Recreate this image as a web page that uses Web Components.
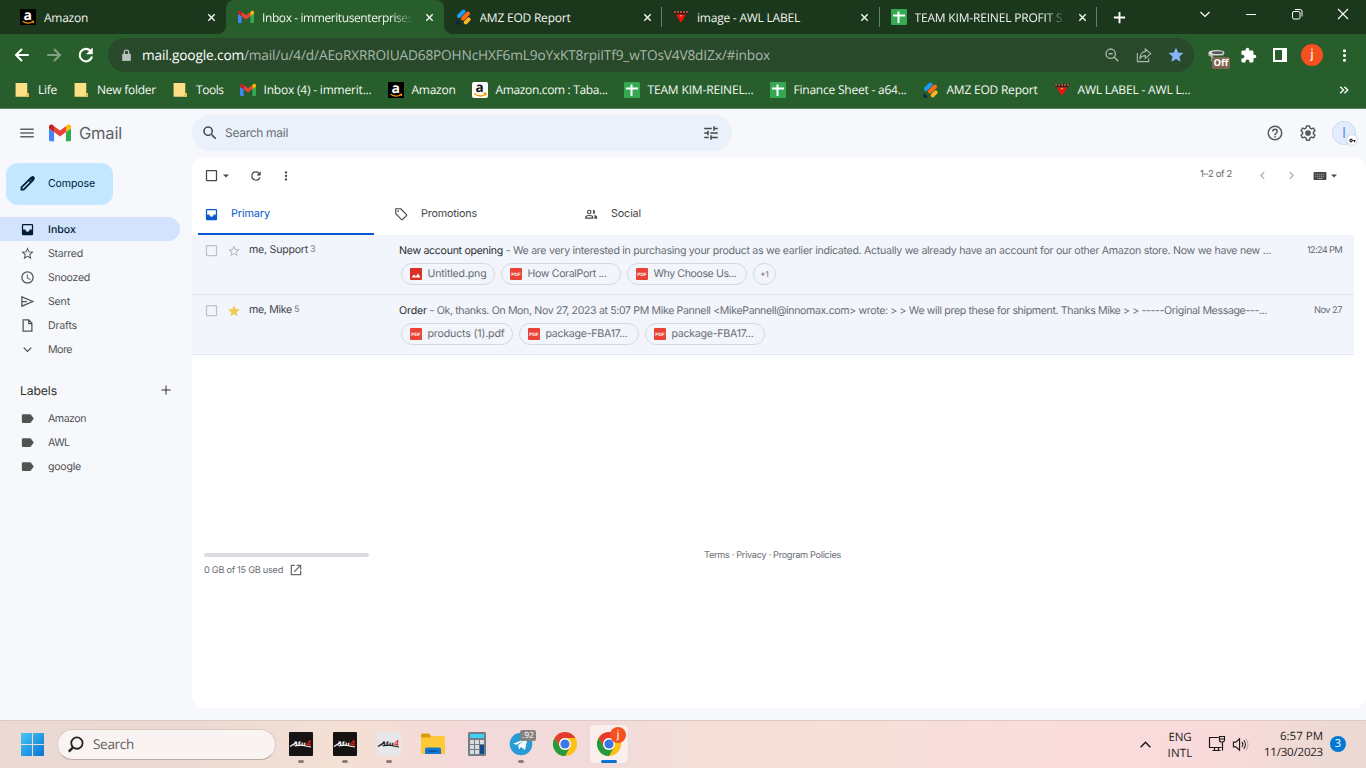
<!DOCTYPE html>
<html lang="en">
<head>
<meta charset="utf-8">
<title>Inbox</title>
<style>
	body {
		margin: 0;
		width: 1366px;
		height: 768px;
		overflow: hidden;
		display: flex;
		flex-direction: column;
		font-family: "Open Sans", "Noto Sans", sans-serif;
		text-rendering: geometricPrecision;
	}
</style>
</head>
<body>
	<browser-tabs></browser-tabs>
	<browser-toolbar></browser-toolbar>
	<bookmarks-bar>
		<book-mark icon="folder" w="19">Life</book-mark>
		<book-mark icon="folder" w="59">New folder</book-mark>
		<book-mark icon="folder" w="27.500">Tools</book-mark>
		<book-mark icon="gmail" w="108">Inbox (4) - immerit...</book-mark>
		<book-mark icon="amazon" w="44">Amazon</book-mark>
		<book-mark icon="amazonLight" w="112">Amazon.com : Taba...</book-mark>
		<book-mark icon="sheet" w="106">TEAM KIM-REINEL...</book-mark>
		<book-mark icon="sheet" w="113">Finance Sheet - a64...</book-mark>
		<book-mark icon="stripes" w="91">AMZ EOD Report</book-mark>
		<book-mark icon="awl" w="113">AWL LABEL - AWL L...</book-mark>
	</bookmarks-bar>
	<mail-app></mail-app>
	<task-bar></task-bar>

<script>
function html(strings, ...values) {
	return String.raw({ raw: strings }, ...values)
}

const mu = (bg, fg) => `<rect width="24" height="24" rx="1" fill="${bg}"/>
	<text x="4.500" y="14.300" font-size="7" font-weight="700" font-style="italic" font-family="Liberation Serif" textLength="12" lengthAdjust="spacingAndGlyphs" fill="${fg}">Mu</text>
	<path d="M1 14.500l7-4.500M6 14l6-1 7 1.500 3 .5" stroke="${fg}" stroke-width="1.200" fill="none"/>
	<text x="17" y="14" font-size="8.500" font-weight="700" font-style="italic" font-family="Liberation Sans" fill="#e6201c">4</text>`

const chrome = `<circle cx="12" cy="12" r="12" fill="#fbc116"/>
	<path d="M1.6 6A12 12 0 0 1 22.4 6H12a6 6 0 0 0-5.2 9z" fill="#e33b2e"/>
	<path d="M1.6 6a12 12 0 0 0 10.4 18l5.2-9a6 6 0 0 1-10.4 0z" fill="#249a41"/>
	<circle cx="12" cy="12" r="5.9" fill="#fff"/><circle cx="12" cy="12" r="4.6" fill="#3b78e7"/>`

const sheet = `<rect width="16" height="16" rx="1" fill="#34a853"/><path d="M2 6.5h12M7.5 2.5V14" stroke="#fff" stroke-width="2"/>`

// name: [viewBox size, markup]
const icons = {
	amazon: [16, `<rect width="16" height="16" fill="#000"/><text x="3.400" y="10.500" font-size="14" font-weight="700" font-family="Open Sans" fill="#fff">a</text><path d="M2.500 12.200q5.500 3.500 10.500.6M11.500 12.300h2v1.600" stroke="#f90" stroke-width="1.100" fill="none"/>`],
	amazonLight: [16, `<rect width="16" height="16" rx="2" fill="#fff"/><text x="3.400" y="10" font-size="13.500" font-weight="700" font-family="Open Sans" fill="#111">a</text><path d="M2 11.500q6 4.500 11.500.8M11.500 11.300h2.500v2" stroke="#f90" stroke-width="1.400" fill="none"/>`],
	gmail: [24, `<path d="M1.500 21H5.500V11L0 7v12.500A1.500 1.500 0 0 0 1.500 21z" fill="#4285f4"/><path d="M18.500 21h4a1.500 1.500 0 0 0 1.500-1.500V7l-5.500 4z" fill="#34a853"/><path d="M18.500 4.500V11L24 7V5.200c0-2.200-2.500-3.200-4.100-2z" fill="#fbbc04"/><path d="M5.500 11V4.500l6.500 4.900 6.500-4.900V11L12 15.900z" fill="#ea4335"/><path d="M0 5.200V7l5.500 4V4.500L4.100 3.200C2.500 2 0 3 0 5.200z" fill="#c5221f"/>`],
	stripes: [16, `<g stroke-width="4" stroke-linecap="round"><path d="M3 7l4.500-4.500" stroke="#1a9bf5"/><path d="M7 9.500l5-5" stroke="#ff6a13"/><path d="M9.700 13.300l3-3" stroke="#fbb829"/></g><path d="M.5 11v4.500H5z" fill="#0b1a5c"/>`],
	awl: [16, `<path d="M0 2h16l-1.500 3h-13z" fill="#45131a"/><path d="M1 3h14" stroke="#e3a05f" stroke-dasharray="2 1"/><path d="M3 5.500h10L8 14z" fill="#f5100c"/><path d="M6.500 6.500h3l-1.500 1z" fill="#fff"/>`],
	sheet: [16, sheet],
	folder: [12, `<path d="M.5 0h10v9.500l1.300 1V13H.5z" transform="scale(1 .9)" fill="#fddf86"/><path d="M10.700 8.500h1.300V12H9.500v-1.500z" fill="#eac04b"/>`],
	close: [24, `<path d="M5 5l14 14M19 5L5 19" stroke="currentColor" stroke-width="3.200"/>`],
	plus: [24, `<path d="M12 3v18M3 12h18" stroke="currentColor" stroke-width="3"/>`],
	thinPlus: [24, `<path d="M12 3v18M3 12h18" stroke="currentColor" stroke-width="2"/>`],
	chevron: [24, `<path d="M3 8l9 9 9-9" stroke="currentColor" stroke-width="2.300" fill="none"/>`],
	up: [24, `<path d="M3 17l9-9 9 9" stroke="currentColor" stroke-width="2.800" fill="none"/>`],
	minimize: [10, `<path d="M0 5.500h10" stroke="currentColor"/>`],
	restore: [12, `<rect x="1.500" y="3.500" width="7.500" height="7.500" rx="1.500" fill="none" stroke="currentColor"/><path d="M4 1.500H9.200a1.800 1.800 0 0 1 1.800 1.800V8.500" fill="none" stroke="currentColor"/>`],
	shut: [12, `<path d="M1 1l10 10M11 1L1 11" stroke="currentColor" stroke-width="1.100"/>`],
	back: [24, `<path d="M21 12H5M12 4l-8 8 8 8" stroke="currentColor" stroke-width="2.700" fill="none"/>`],
	forward: [24, `<path d="M3 12h16M12 4l8 8-8 8" stroke="currentColor" stroke-width="2.700" fill="none"/>`],
	reload: [24, `<path d="M18.500 7A8.300 8.300 0 1 0 20 14" stroke="currentColor" stroke-width="2.900" fill="none"/><path d="M21 2v9h-9z" fill="currentColor"/>`],
	refresh: [24, `<path d="M17.650 6.350A7.960 7.960 0 0 0 12 4a8 8 0 1 0 7.730 10h-2.080A6 6 0 1 1 12 6c1.660 0 3.140.69 4.220 1.780L13 11h7V4z" fill="currentColor"/>`],
	lock: [24, `<path d="M4 9h16v13H4z" fill="currentColor"/><path d="M8 10V6a4 4 0 0 1 8 0v4" stroke="currentColor" stroke-width="2.500" fill="none"/>`],
	zoomOut: [24, `<circle cx="10" cy="10" r="7" fill="none" stroke="currentColor" stroke-width="2"/><path d="M15 15l6.500 6.500M7 10h6" stroke="currentColor" stroke-width="2.200"/>`],
	share: [24, `<path d="M2 9v13h17v-5" fill="none" stroke="currentColor" stroke-width="1.700"/><path d="M14 3l8 7-8 7v-4c-4 0-6 1-8 4 0-6 3-10 8-10z" fill="none" stroke="currentColor" stroke-width="1.700"/>`],
	star: [24, `<path d="M12 17.270L18.180 21l-1.640-7.030L22 9.240l-7.190-.61L12 2 9.190 8.630 2 9.240l5.460 4.730L5.820 21z" fill="currentColor"/>`],
	starOutline: [24, `<path d="M22 9.240l-7.190-.62L12 2 9.190 8.630 2 9.240l5.460 4.730L5.820 21 12 17.270 18.180 21l-1.630-7.030zM12 15.400l-3.760 2.270 1-4.280-3.320-2.880 4.380-.38L12 6.100l1.710 4.040 4.380.38-3.320 2.880 1 4.280z" fill="currentColor"/>`],
	puzzle: [24, `<path d="M20.500 11H19V7a2 2 0 0 0-2-2h-4V3.500a2.500 2.500 0 0 0-5 0V5H4a2 2 0 0 0-2 2v3.800h1.500a2.700 2.700 0 0 1 0 5.400H2V20a2 2 0 0 0 2 2h3.800v-1.500a2.700 2.700 0 0 1 5.400 0V22H17a2 2 0 0 0 2-2v-4h1.500a2.500 2.500 0 0 0 0-5z" fill="currentColor"/>`],
	panel: [14, `<path d="M0 0h14v14H0zM2 2v10h7V2z" fill-rule="evenodd" fill="currentColor"/>`],
	dots: [24, `<path d="M12 8a2 2 0 1 0 0-4 2 2 0 0 0 0 4zm0 2a2 2 0 1 0 0 4 2 2 0 0 0 0-4zm0 6a2 2 0 1 0 0 4 2 2 0 0 0 0-4z" fill="currentColor"/>`],
	visor: [18, `<path d="M.5 6v3l3 1.500V15l2 1V9h11V6z" fill="#b5b5b5"/><ellipse cx="9" cy="6" rx="8.500" ry="2.800" fill="#dcdcdc"/><ellipse cx="10" cy="6" rx="6" ry="1.400" fill="#555"/>`],
	more: [12, `<path d="M1.500 2l4 4-4 4M6.500 2l4 4-4 4" stroke="currentColor" stroke-width="1.700" fill="none"/>`],
	menu: [24, `<path d="M3 18h18v-2H3zm0-5h18v-2H3zm0-7v2h18V6z" fill="currentColor"/>`],
	search: [24, `<path d="M15.500 14h-.79l-.28-.27a6.500 6.500 0 1 0-.7.700l.27.280v.79l5 4.990L20.490 19zm-6 0a4.500 4.500 0 1 1 0-9 4.500 4.500 0 0 1 0 9z" fill="currentColor"/>`],
	tune: [24, `<path d="M3 17v2h6v-2zM3 5v2h10V5zm10 16v-2h8v-2h-8v-2h-2v6zM7 9v2H3v2h4v2h2V9zm14 4v-2H11v2zm-6-4h2V7h4V5h-4V3h-2z" fill="currentColor"/>`],
	help: [24, `<path d="M11 18h2v-2h-2zm1-16a10 10 0 1 0 0 20 10 10 0 0 0 0-20zm0 18a8 8 0 1 1 0-16 8 8 0 0 1 0 16zm0-14a4 4 0 0 0-4 4h2a2 2 0 1 1 4 0c0 2-3 1.750-3 5h2c0-2.250 3-2.500 3-5a4 4 0 0 0-4-4z" fill="currentColor"/>`],
	gear: [24, `<path d="M10 2.500h4l.6 2.800 2 1.200 2.700-1 2 3.500L19.200 11v2l2.100 2-2 3.500-2.700-1-2 1.200-.6 2.800h-4l-.6-2.800-2-1.200-2.700 1L2.700 15l2.100-2v-2L2.700 9l2-3.500 2.700 1 2-1.200z" fill="none" stroke="currentColor" stroke-width="2" stroke-linejoin="round"/><circle cx="12" cy="12" r="3.800" fill="currentColor"/>`],
	key: [24, `<path d="M12.700 10a6 6 0 1 0 0 4H17v4h4v-4h2v-4zM7 14a2 2 0 1 1 0-4 2 2 0 0 1 0 4z" fill="currentColor"/>`],
	pencil: [24, `<path d="M3.500 17.500l13-13a2.100 2.100 0 0 1 3 3l-13 13H3.500zM14 7l3 3" fill="none" stroke="currentColor" stroke-width="2.500"/><path d="M15 5l2.500-2.500a2.300 2.300 0 0 1 4 4L19 9z" fill="currentColor"/>`],
	inbox: [24, `<path d="M19 3H5a2 2 0 0 0-2 2v14a2 2 0 0 0 2 2h14a2 2 0 0 0 2-2V5a2 2 0 0 0-2-2zm0 11h-4a3 3 0 0 1-6 0H5V5h14z" fill="currentColor"/><path d="M5 12h14v7H5zM8.500 12a3.500 3.500 0 0 0 7 0z" fill-rule="evenodd" fill="currentColor"/>`],
	clock: [24, `<path d="M12 2a10 10 0 1 0 0 20 10 10 0 0 0 0-20zm0 18a8 8 0 1 1 0-16 8 8 0 0 1 0 16zm.5-13H11v6l5.250 3.150.75-1.230-4.500-2.670z" fill="currentColor"/>`],
	send: [24, `<path d="M3 4.500l17.500 7.500L3 19.500zM3 12h8" fill="none" stroke="currentColor" stroke-width="2"/>`],
	draft: [24, `<path d="M5 3h9l5 5v13H5zM14 3v6h5" fill="none" stroke="currentColor" stroke-width="2"/>`],
	expand: [24, `<path d="M6 9l6 6 6-6" fill="none" stroke="currentColor" stroke-width="2.200"/>`],
	label: [24, `<path d="M17.630 5.840A2 2 0 0 0 16 5H5a2 2 0 0 0-2 2v10a2 2 0 0 0 2 2h11a2 2 0 0 0 1.630-.84L22 12z" fill="currentColor"/>`],
	box: [24, `<path d="M19 5v14H5V5zm0-2H5a2 2 0 0 0-2 2v14a2 2 0 0 0 2 2h14a2 2 0 0 0 2-2V5a2 2 0 0 0-2-2z" fill="currentColor"/>`],
	caret: [8, `<path d="M0 2h8L4 6z" fill="currentColor"/>`],
	left: [24, `<path d="M15.400 7.400L14 6l-6 6 6 6 1.400-1.400L10.800 12z" fill="currentColor"/>`],
	right: [24, `<path d="M10 6L8.600 7.400l4.600 4.600-4.600 4.600L10 18l6-6z" fill="currentColor"/>`],
	keyboard: [24, `<rect x="1" y="5" width="22" height="14" rx="1.500" fill="currentColor"/><path d="M4 9h16M4 12.500h16" stroke="#aaa" stroke-width="1.500" stroke-dasharray="2 1.200"/><path d="M7 16h10" stroke="#aaa" stroke-width="1.500"/>`],
	tag: [24, `<path d="M3 3h8.500l10 10a1 1 0 0 1 0 1.500l-7 7a1 1 0 0 1-1.500 0L3 11.500z" fill="none" stroke="currentColor" stroke-width="2" stroke-linejoin="round"/><circle cx="7" cy="7" r="1.500" fill="currentColor"/>`],
	people: [24, `<circle cx="9" cy="8.500" r="3" fill="none" stroke="currentColor" stroke-width="2"/><path d="M3 19v-1.500c0-2 3.500-3 6-3s6 1 6 3V19z" stroke="currentColor" stroke-width="2" fill="none"/><path d="M15 4.500a4 4 0 0 1 0 8q2-4 0-8zM17.500 13.700c3 .5 5 1.500 5 3.300v3H18v-3c0-1.500 0-2.300-.5-3.300z" fill="currentColor"/>`],
	image: [12, `<rect width="12" height="12" rx="1" fill="#d93025"/><path d="M1.500 9.500L4 6.500 6 8.500l2-3 2.500 4z" fill="#fff"/>`],
	pdf: [12, `<rect width="12" height="12" rx="1" fill="#ea4335"/><text x="1.200" y="7.800" textLength="9.600" font-size="4.800" font-weight="800" font-family="Liberation Sans" fill="#fff">PDF</text>`],
	open: [24, `<path d="M10 4H4v16h16v-7M13 4h7v7M19 5L9 15" fill="none" stroke="currentColor" stroke-width="2.200"/>`],
	windows: [24, `<defs><linearGradient id="w" x1="0" y1="0" x2="1" y2="1"><stop stop-color="#46c8f7"/><stop offset="1" stop-color="#0673d2"/></linearGradient></defs><path d="M0 0h11.400v11.400H0zM12.600 0H24v11.400H12.600zM0 12.600h11.400V24H0zM12.600 12.600H24V24H12.600z" fill="url(#w)"/>`],
	find: [24, `<circle cx="14" cy="10" r="8" fill="none" stroke="currentColor" stroke-width="2.500"/><path d="M8.500 16l-6 6" stroke="currentColor" stroke-width="3.200"/>`],
	muDark: [24, mu('#171313', '#fff')],
	muLight: [24, mu('#e6e7e8', '#111')],
	explorer: [24, `<path d="M0 3a1.500 1.500 0 0 1 1.500-1.500H8L10 4v4H0z" fill="#dc9b05"/><path d="M0 5.500h9l1.500-1.500H22.500A1.500 1.500 0 0 1 24 5.500V22H0z" fill="#fdc938"/><path d="M4 22v-4.500A2 2 0 0 1 6 15.500h12a2 2 0 0 1 2 2V22z" fill="#1278cf"/><path d="M7.500 19h9" stroke="#0a4e9b" stroke-width="1.500"/>`],
	calculator: [24, `<rect x="3" width="18" height="24" rx="1.500" fill="#747b83"/><path d="M5 2h14v4H5z" fill="#3cd1f5"/><path d="M5 8h4v4H5zm5 0h4v4h-4zm5 0h4v4h-4zM5 13h4v4H5zm5 0h4v4h-4zM5 18h4v4H5zm5 0h4v4h-4z" fill="#d7dde2"/><path d="M15 13h4v9h-4z" fill="#114c8b"/>`],
	telegram: [24, `<circle cx="12" cy="12" r="11.300" fill="#269bd5"/><path d="M4 11.800L18.500 6 16 18l-4-3-2 2.500-.8-4.300 6-5-7.400 4.600z" fill="#fff"/>`],
	chrome: [24, chrome],
	network: [18, `<path d="M10.500 2.500H1.500v10h12M4.500 15.500h8M6.500 13v2.500M10.500 13v2.500M14.500 7v8.500M11.500 1.500h5v3.500a2 2 0 0 1-2 2h-1a2 2 0 0 1-2-2zM11.500 4h5" fill="none" stroke="currentColor" stroke-width="1.200"/>`],
	speaker: [18, `<path d="M1.500 6.500v5H4L8 15V3L4 6.500z" fill="none" stroke="currentColor" stroke-width="1.200"/><path d="M10.500 6.500a4 4 0 0 1 0 5M12.500 4.500a7 7 0 0 1 0 9" fill="none" stroke="currentColor" stroke-width="1.200"/><path d="M14.500 2.500a10 10 0 0 1 0 13" fill="none" stroke="currentColor" opacity=".3"/>`],
}


/**
 * Square tab with favicon, title and close button
 */
class BrowserTab extends HTMLElement {
	connectedCallback() {
		this.attachShadow({ mode: 'open' }).innerHTML = html`
			<ui-icon name="${this.getAttribute('icon')}" size="16"></ui-icon>
			<div class="title"><fit-text w="${this.getAttribute('w')}"><slot></slot></fit-text></div>
			<ui-icon class="close" name="close" size="11"></ui-icon>
			<style>
			:host {
				box-sizing: border-box;
				width: 217.5px;
				height: 34px;
				padding: 0 8.500px 0 12px;
				display: flex;
				align-items: center;
				color: #f1f4f1;
				position: relative;
			}
			:host([first]) {
				width: 218px;
				padding-right: 9.500px;
			}
			.title {
				margin-left: 8px;
				width: 151px;
				overflow: hidden;
				white-space: nowrap;
			}
			:host([long]) .title {
				-webkit-mask-image: linear-gradient(to right, #000 130px, transparent 151px);
			}
			.close {
				margin-left: auto;
			}
			:host([line])::after {
				content: "";
				position: absolute;
				right: -1px;
				top: 7px;
				width: 1px;
				height: 20px;
				background: #64806a;
			}
			:host([active]) {
				background: #285e2b;
				border-radius: 8px 8px 0 0;
			}
			:host([active])::before, :host([active])::after {
				content: "";
				position: absolute;
				bottom: 0;
				width: 8px;
				height: 8px;
			}
			:host([active])::before {
				left: -8px;
				background: radial-gradient(circle at 0 0, transparent 7.500px, #285e2b 8px);
			}
			:host([active])::after {
				right: -8px;
				background: radial-gradient(circle at 100% 0, transparent 7.500px, #285e2b 8px);
			}
			</style>
		`
	}
}


/**
 *
 */
class BrowserTabs extends HTMLElement {
	connectedCallback() {
		this.attachShadow({ mode: 'open' }).innerHTML = html`
			<browser-tab icon="amazon" w="44" first>Amazon</browser-tab>
			<browser-tab icon="gmail" w="151" active long>Inbox - immeritusenterprises</browser-tab>
			<browser-tab icon="stripes" w="91" line>AMZ EOD Report</browser-tab>
			<browser-tab icon="awl" w="103" line>image - AWL LABEL</browser-tab>
			<browser-tab icon="sheet" w="148" line long>TEAM KIM-REINEL PROFIT S</browser-tab>
			<span class="new"><ui-icon name="plus" size="15"></ui-icon></span>
			<div class="window">
				<span><ui-icon name="chevron" size="12"></ui-icon></span>
				<span><ui-icon name="minimize" size="10"></ui-icon></span>
				<span><ui-icon name="restore" size="12"></ui-icon></span>
				<span><ui-icon name="shut" size="12"></ui-icon></span>
			</div>
			<style>
			:host {
				display: flex;
				height: 34px;
				padding-left: 8px;
				background: #1b371c;
				color: #fff;
				font-size: 12px;
			}
			span {
				display: flex;
				align-items: center;
				justify-content: center;
			}
			.new {
				width: 46px;
			}
			.window {
				margin-left: auto;
				display: flex;
				height: 28px;
			}
			.window span {
				width: 46px;
			}
			</style>
		`
	}
}


/**
 * Navigation buttons, address field and extensions
 */
class BrowserToolbar extends HTMLElement {
	connectedCallback() {
		this.attachShadow({ mode: 'open' }).innerHTML = html`
			<span><ui-icon name="back" size="18"></ui-icon></span>
			<span class="off"><ui-icon name="forward" size="18"></ui-icon></span>
			<span><ui-icon name="reload" size="18"></ui-icon></span>
			<div class="address">
				<ui-icon class="lock" name="lock" size="13"></ui-icon>
				<fit-text class="host" w="102">mail.google.com</fit-text><fit-text w="526">/mail/u/4/d/AEoRXRROIUAD68POHNcHXF6mL9oYxKT8rpiITf9_wTOsV4V8dIZx/#inbox</fit-text>
				<div class="actions">
					<span><ui-icon name="zoomOut" size="16"></ui-icon></span>
					<span><ui-icon name="share" size="16"></ui-icon></span>
					<span class="saved"><ui-icon name="star" size="18"></ui-icon></span>
				</div>
			</div>
			<span class="ext"><ui-icon name="visor" size="17"></ui-icon><b>Off</b></span>
			<span><ui-icon name="puzzle" size="17"></ui-icon></span>
			<span><ui-icon name="panel" size="14"></ui-icon></span>
			<span><i>j</i></span>
			<span><ui-icon name="dots" size="19"></ui-icon></span>
			<style>
			:host {
				display: flex;
				align-items: center;
				height: 42px;
				padding: 0 6px;
				background: #285e2b;
				color: #fff;
				font-size: 13.700px;
			}
			span {
				width: 32px;
				height: 32px;
				display: flex;
				align-items: center;
				justify-content: center;
				position: relative;
			}
			.off {
				color: #83a084;
			}
			.address {
				box-sizing: border-box;
				width: 1086px;
				height: 34px;
				margin: 0 6px;
				padding: 0 2px 0 12px;
				border-radius: 17px;
				background: #28492a;
				display: flex;
				align-items: center;
				color: #a9b8aa;
			}
			.lock {
				margin-right: 9px;
				color: #b9c2b9;
			}
			.host {
				color: #fff;
			}
			.actions {
				margin-left: auto;
				display: flex;
			}
			.saved {
				color: #8ab4f8;
			}
			b {
				position: absolute;
				left: 12px;
				top: 18px;
				width: 18px;
				height: 12px;
				border-radius: 2px;
				background: #826551;
				font-size: 9.500px;
				line-height: 12px;
				text-align: center;
			}
			i {
				width: 22px;
				height: 22px;
				border-radius: 50%;
				background: #f4511e;
				font: 13px/21px Roboto, sans-serif;
				text-align: center;
			}
			</style>
		`
	}
}


/**
 *
 */
class BookMark extends HTMLElement {
	connectedCallback() {
		const icon = this.getAttribute('icon')
		this.attachShadow({ mode: 'open' }).innerHTML = html`
			<div><ui-icon name="${icon}" size="${icon == 'folder' ? 14 : 16}"></ui-icon></div>
			<fit-text w="${this.getAttribute('w')}"><slot></slot></fit-text>
			<style>
			:host {
				display: flex;
				align-items: center;
				gap: 8px;
			}
			div {
				width: 16px;
				display: flex;
			}
			:host([icon="folder"]) div {
				justify-content: center;
			}
			</style>
		`
	}
}

class BookmarksBar extends HTMLElement {
	connectedCallback() {
		this.attachShadow({ mode: 'open' }).innerHTML = html`
			<slot></slot>
			<ui-icon class="more" name="more" size="10"></ui-icon>
			<style>
			:host {
				box-sizing: border-box;
				display: flex;
				align-items: center;
				gap: 16px;
				height: 33px;
				padding: 0 17px 5px 14px;
				background: #285e2b;
				border-bottom: 1px solid #5d8860;
				color: #f5f8f5;
				font-size: 12px;
			}
			.more {
				margin-left: auto;
			}
			</style>
		`
	}
}


/**
 * Sidebar entry, for folders and labels
 */
class NavItem extends HTMLElement {
	connectedCallback() {
		this.attachShadow({ mode: 'open' }).innerHTML = html`
			<ui-icon name="${this.getAttribute('icon')}" size="15"></ui-icon>
			<fit-text w="${this.getAttribute('w')}"><slot></slot></fit-text>
			<style>
			:host {
				box-sizing: border-box;
				display: flex;
				align-items: center;
				gap: 13px;
				width: 180px;
				height: 24px;
				padding-left: 20px;
				color: #505352;
			}
			:host([active]) {
				background: #d3e3fd;
				border-radius: 0 12px 12px 0;
				color: #001d35;
				font-weight: 500;
			}
			</style>
		`
	}
}


/**
 *
 */
class MailSidebar extends HTMLElement {
	connectedCallback() {
		this.attachShadow({ mode: 'open' }).innerHTML = html`
			<button><ui-icon name="pencil" size="17"></ui-icon><fit-text w="47">Compose</fit-text></button>
			<nav-item icon="inbox" w="28" active>Inbox</nav-item>
			<nav-item icon="starOutline" w="35">Starred</nav-item>
			<nav-item icon="clock" w="42">Snoozed</nav-item>
			<nav-item icon="send" w="22">Sent</nav-item>
			<nav-item icon="draft" w="29">Drafts</nav-item>
			<nav-item icon="expand" w="24">More</nav-item>
			<header><fit-text w="37">Labels</fit-text><ui-icon name="thinPlus" size="12"></ui-icon></header>
			<nav-item icon="label" w="38">Amazon</nav-item>
			<nav-item icon="label" w="21.500">AWL</nav-item>
			<nav-item icon="label" w="33">google</nav-item>
			<style>
			:host {
				display: block;
				width: 192px;
				padding-top: 6px;
				box-sizing: border-box;
			}
			button {
				width: 107px;
				height: 42px;
				margin: 0 0 12px 6px;
				padding: 0 0 1px 13px;
				border: 0;
				border-radius: 12px;
				background: #c2e7ff;
				color: #001d35;
				font: inherit;
				display: flex;
				align-items: center;
				gap: 12px;
			}
			header {
				display: flex;
				justify-content: space-between;
				align-items: center;
				height: 24px;
				margin: 17px 20px 4px 20px;
				font-size: 12.200px;
				color: #303030;
			}
			</style>
		`
	}
}


/**
 *
 */
class MailHeader extends HTMLElement {
	connectedCallback() {
		this.attachShadow({ mode: 'open' }).innerHTML = html`
			<div class="brand">
				<ui-icon name="menu" size="18"></ui-icon>
				<ui-icon name="gmail" size="22"></ui-icon>
				<fit-text w="43">Gmail</fit-text>
			</div>
			<div class="search">
				<ui-icon name="search" size="18"></ui-icon>
				<fit-text w="63">Search mail</fit-text>
				<ui-icon class="tune" name="tune" size="18"></ui-icon>
			</div>
			<div class="account">
				<ui-icon name="help" size="18"></ui-icon>
				<ui-icon name="gear" size="18"></ui-icon>
				<div class="avatar">I<em><ui-icon name="key" size="7"></ui-icon></em></div>
			</div>
			<style>
			:host {
				display: flex;
				align-items: center;
				height: 48px;
				color: #56595d;
			}
			.brand {
				width: 174px;
				padding-left: 18px;
				display: flex;
				align-items: center;
				font-size: 16.500px;
				color: #5f6368;
			}
			.brand ui-icon + ui-icon {
				margin: 0 8px 0 13px;
			}
			.search {
				box-sizing: border-box;
				width: 540px;
				height: 36px;
				padding: 0 12px 0 9px;
				border-radius: 18px;
				background: #eaf1fb;
				display: flex;
				align-items: center;
				gap: 6px;
				font-size: 12px;
				color: #6b6f74;
			}
			.search fit-text {
				margin-top: -1px;
			}
			.search ui-icon {
				color: #444746;
			}
			.tune {
				margin-left: auto;
			}
			.account {
				margin-left: auto;
				padding-right: 10px;
				display: flex;
				align-items: center;
				gap: 15px;
			}
			.avatar {
				box-sizing: border-box;
				width: 24px;
				height: 24px;
				border: 1px solid #cbd9ec;
				border-radius: 50%;
				background: #e3edfd;
				font: 15px/22px Inter, sans-serif;
				text-align: center;
				color: #6096e8;
				position: relative;
			}
			em {
				position: absolute;
				right: -2px;
				bottom: -1px;
				width: 10px;
				height: 10px;
				border-radius: 50%;
				background: #fff;
				box-shadow: 0 0 2px #aaa;
				color: #333;
				display: flex;
				align-items: center;
				justify-content: center;
			}
			</style>
		`
	}
}


/**
 * Attachment pill
 */
class FileChip extends HTMLElement {
	connectedCallback() {
		this.attachShadow({ mode: 'open' }).innerHTML = html`
			<ui-icon name="${this.getAttribute('icon')}" size="12"></ui-icon>
			<fit-text w="${this.getAttribute('w')}"><slot></slot></fit-text>
			<style>
			:host {
				box-sizing: border-box;
				display: flex;
				align-items: center;
				gap: 5.500px;
				height: 22px;
				min-width: var(--chip-width, 0);
				padding: 0 7.500px 0 8px;
				border: 1px solid #d3dae3;
				border-radius: 11px;
				color: #696d72;
			}
			</style>
		`
	}
}


/**
 *
 */
class MailRow extends HTMLElement {
	connectedCallback() {
		const starred = this.hasAttribute('starred')
		this.attachShadow({ mode: 'open' }).innerHTML = html`
			<ui-icon class="check" name="box" size="15"></ui-icon>
			<ui-icon class="star" name="${starred ? 'star' : 'starOutline'}" size="14"></ui-icon>
			<div class="from"><slot name="from"></slot></div>
			<div class="body">
				<div class="line"><slot name="subject"></slot><slot name="preview"></slot></div>
				<div class="files"><slot></slot></div>
			</div>
			<div class="date"><slot name="date"></slot></div>
			<style>
			:host {
				box-sizing: border-box;
				display: flex;
				width: 1162px;
				height: 60px;
				padding: 7px 12px 0 12px;
				border-bottom: 1px solid #e1e7f0;
				background: #f2f5fc;
				color: #696d72;
				line-height: 16px;
			}
			.check, .star {
				margin-top: 1px;
				color: #bfc3c8;
			}
			.star {
				margin-top: 2px;
				margin-left: 8px;
				color: ${starred ? '#f4c84a' : '#b5b9be'};
			}
			.from {
				width: 150px;
				margin-left: 8px;
				display: flex;
				gap: 2px;
				color: #404347;
			}
			.line {
				display: flex;
				white-space: nowrap;
				margin-top: 1px;
			}
			::slotted([slot="subject"]) {
				color: #2c2d30;
			}
			.files {
				display: flex;
				gap: 6px;
				margin: 4px 0 0 2px;
			}
			.date {
				margin: 1px 0 0 auto;
				font-size: 9.300px;
			}
			</style>
		`
	}
}


/**
 * White sheet with toolbar, category tabs, messages and footer
 */
class MailPanel extends HTMLElement {
	connectedCallback() {
		this.attachShadow({ mode: 'open' }).innerHTML = html`
			<div class="tools">
				<ui-icon name="box" size="15"></ui-icon>
				<ui-icon class="caret" name="caret" size="6"></ui-icon>
				<ui-icon class="refresh" name="refresh" size="14"></ui-icon>
				<ui-icon class="dots" name="dots" size="14"></ui-icon>
				<fit-text w="32">1–2 of 2</fit-text>
				<ui-icon class="prev" name="left" size="15"></ui-icon>
				<ui-icon class="next" name="right" size="15"></ui-icon>
				<ui-icon class="keys" name="keyboard" size="14"></ui-icon>
				<ui-icon class="caret" name="caret" size="6"></ui-icon>
			</div>
			<div class="tabs">
				<div class="active"><ui-icon name="inbox" size="15"></ui-icon><fit-text w="39">Primary</fit-text></div>
				<div><ui-icon name="tag" size="14"></ui-icon><fit-text w="56">Promotions</fit-text></div>
				<div><ui-icon name="people" size="14"></ui-icon><fit-text w="30">Social</fit-text></div>
			</div>
			<mail-row>
				<fit-text slot="from" w="59">me, Support</fit-text><small slot="from">3</small>
				<fit-text slot="subject" w="104">New account opening</fit-text>
				<fit-text slot="preview" w="768"> - We are very interested in purchasing your product as we earlier indicated. Actually we already have an account for our other Amazon store. Now we have new ...</fit-text>
				<file-chip icon="image" w="59">Untitled.png</file-chip>
				<file-chip icon="pdf" w="79" class="wide">How CoralPort ...</file-chip>
				<file-chip icon="pdf" w="83" class="wide">Why Choose Us...</file-chip>
				<span class="extra">+1</span>
				<fit-text slot="date" w="35">12:24 PM</fit-text>
			</mail-row>
			<mail-row starred>
				<fit-text slot="from" w="43">me, Mike</fit-text><small slot="from">5</small>
				<fit-text slot="subject" w="28">Order</fit-text>
				<fit-text slot="preview" w="840"> - Ok, thanks. On Mon, Nov 27, 2023 at 5:07 PM Mike Pannell &lt;MikePannell@innomax.com&gt; wrote: &gt; &gt; We will prep these for shipment. Thanks Mike &gt; &gt; -----Original Message---...</fit-text>
				<file-chip icon="pdf" w="77">products (1).pdf</file-chip>
				<file-chip icon="pdf" w="82" class="wide">package-FBA17...</file-chip>
				<file-chip icon="pdf" w="82" class="wide">package-FBA17...</file-chip>
				<fit-text slot="date" w="28">Nov 27</fit-text>
			</mail-row>
			<footer>
				<div class="quota">
					<div class="bar"></div>
					<div class="used"><fit-text w="79">0 GB of 15 GB used</fit-text><ui-icon name="open" size="14"></ui-icon></div>
				</div>
				<fit-text w="137">Terms · Privacy · Program Policies</fit-text>
			</footer>
			<style>
			:host {
				display: block;
				width: 1174px;
				height: 551px;
				border-radius: 12px;
				background: #fff;
				color: #444746;
			}
			.tools {
				display: flex;
				align-items: center;
				height: 37px;
				margin-bottom: -1px;
				padding: 0 29px 0 12px;
				font-size: 9.500px;
			}
			.tools fit-text {
				color: #66696d;
				margin-top: -2px;
			}
			.caret {
				margin-left: 4px;
			}
			.refresh {
				margin-left: 20px;
			}
			.dots {
				margin: 0 auto 0 16px;
			}
			.prev {
				margin-left: 23px;
				color: #a9acaf;
			}
			.next {
				margin: 0 14px;
				color: #a9acaf;
			}
			.tabs {
				display: flex;
				height: 42px;
			}
			.tabs div {
				box-sizing: border-box;
				width: 190px;
				padding: 0 0 2px 12px;
				display: flex;
				align-items: center;
				gap: 13px;
				color: #444746;
				font-size: 10.800px;
			}
			.tabs div.active {
				width: 176px;
				margin: 0 14px 0 6px;
				padding: 0 0 0 6px;
				gap: 12px;
				border-bottom: 2px solid #0b57d0;
				color: #0b57d0;
			}
			.tabs div:not(.active) {
				margin-left: -6px;
				margin-right: 6px;
			}
			.tabs ui-icon {
				margin-top: 2px;
			}
			small {
				font-size: 9px;
				color: #777b80;
			}
			.wide {
				--chip-width: 120px;
			}
			.extra {
				box-sizing: border-box;
				width: 23px;
				height: 22px;
				border: 1px solid #d3dae3;
				border-radius: 11px;
				text-align: center;
				font-size: 8px;
				line-height: 20px;
			}
			footer {
				display: flex;
				align-items: flex-start;
				height: 30px;
				margin: 198px 0 0 12px;
				font-size: 9.200px;
				line-height: 12px;
				color: #696d72;
			}
			footer > fit-text {
				margin: -3px 0 0 335px;
			}
			.bar {
				width: 165px;
				height: 4px;
				border-radius: 2px;
				background: #dadce0;
			}
			.used {
				display: flex;
				align-items: center;
				gap: 6px;
				margin-top: 6px;
			}
			.used fit-text {
				margin-top: 1px;
			}
			</style>
		`
	}
}


/**
 *
 */
class MailApp extends HTMLElement {
	connectedCallback() {
		this.attachShadow({ mode: 'open' }).innerHTML = html`
			<mail-header></mail-header>
			<main>
				<mail-sidebar></mail-sidebar>
				<mail-panel></mail-panel>
			</main>
			<style>
			:host {
				display: block;
				height: 611px;
				background: #f6f8fc;
				font-family: Inter, Roboto, sans-serif;
				font-size: 10.600px;
			}
			main {
				display: flex;
			}
			</style>
		`
	}
}


/**
 * Taskbar button with a running indicator
 */
class TaskButton extends HTMLElement {
	connectedCallback() {
		this.attachShadow({ mode: 'open' }).innerHTML = html`
			<ui-icon name="${this.getAttribute('icon')}" size="24"></ui-icon>
			<slot></slot>
			<style>
			:host {
				width: 38px;
				height: 38px;
				margin: 0 3px;
				border-radius: 4px;
				display: flex;
				align-items: center;
				justify-content: center;
				position: relative;
			}
			:host([running])::after {
				content: "";
				position: absolute;
				bottom: 0;
				left: 16px;
				width: 6px;
				height: 3px;
				border-radius: 2px;
				background: #88807f;
			}
			:host([active]) {
				background: #fbefee;
				box-shadow: 0 0 1px #cdbab7;
			}
			:host([active])::after {
				left: 11px;
				width: 16px;
				background: #0a74d4;
			}
			::slotted(*) {
				position: absolute;
			}
			</style>
		`
	}
}


/**
 *
 */
class TaskBar extends HTMLElement {
	connectedCallback() {
		this.attachShadow({ mode: 'open' }).innerHTML = html`
			<ui-icon name="windows" size="23"></ui-icon>
			<div class="search"><ui-icon name="find" size="17"></ui-icon><fit-text w="41">Search</fit-text></div>
			<task-button icon="muDark" running></task-button>
			<task-button icon="muDark" running></task-button>
			<task-button icon="muLight" running></task-button>
			<task-button icon="explorer"></task-button>
			<task-button icon="calculator"></task-button>
			<task-button icon="telegram" running><span class="count">.92</span></task-button>
			<task-button icon="chrome"></task-button>
			<task-button icon="chrome" running active><span class="user">j</span></task-button>
			<div class="tray">
				<ui-icon name="up" size="13"></ui-icon>
				<div class="lang"><fit-text w="23">ENG</fit-text><fit-text w="25">INTL</fit-text></div>
				<ui-icon name="network" size="18"></ui-icon>
				<ui-icon class="speaker" name="speaker" size="17"></ui-icon>
				<div class="time"><fit-text w="43">6:57 PM</fit-text><fit-text w="59">11/30/2023</fit-text></div>
				<div class="alerts">3</div>
			</div>
			<style>
			:host {
				box-sizing: border-box;
				display: flex;
				align-items: center;
				height: 48px;
				padding: 0 20px 1px 21px;
				border-top: 1px solid #dfc9c3;
				background: linear-gradient(100deg, #eadad2 0%, #ecd9d3 14%, #f4e0d4 25%, #f3d9d9 34%, #f2dadb 42%, #f4e0d8 52%, #f6dfd9 64%, #fbdcdd 78%, #fadbdc 88%, #e9d9d1 100%);
				color: #1c1919;
				font-size: 11.500px;
			}
			.search {
				box-sizing: border-box;
				width: 219px;
				height: 31px;
				margin: 0 3px 0 13px;
				padding-left: 9px;
				border: 1px solid #dccbc6;
				border-bottom-color: #b9aba7;
				border-radius: 16px;
				background: #f9f3f1;
				display: flex;
				align-items: center;
				gap: 9px;
				font-size: 13.500px;
				color: #625d5c;
			}
			.search ui-icon {
				color: #222;
			}
			.count {
				top: 5px;
				left: 18px;
				padding: 0 2px;
				border-radius: 2px;
				background: #858281;
				color: #fff;
				font-size: 8.500px;
				line-height: 11px;
			}
			.user {
				top: 2px;
				left: 20px;
				width: 16px;
				height: 16px;
				border-radius: 50%;
				background: #f4511e;
				color: #fff;
				font: 11px/15px Roboto, sans-serif;
				text-align: center;
			}
			.tray {
				margin-left: auto;
				display: flex;
				align-items: center;
			}
			.lang, .time {
				display: flex;
				flex-direction: column;
				align-items: center;
				line-height: 16px;
				padding-top: 1px;
			}
			.lang {
				width: 26px;
				padding-top: 3px;
				margin: 0 15px 0 15px;
			}
			.speaker {
				margin: 0 15px 0 6px;
			}
			.time {
				align-items: flex-end;
			}
			.alerts {
				width: 16px;
				height: 16px;
				margin-left: 7px;
				border-radius: 50%;
				background: #0078d4;
				color: #fff;
				font-size: 11px;
				line-height: 15px;
				text-align: center;
			}
			</style>
		`
	}
}


/**
 * Icon from the set above
 */
class UiIcon extends HTMLElement {
	connectedCallback() {
		const [box, markup] = icons[this.getAttribute('name')]
		const size = this.getAttribute('size')
		this.attachShadow({ mode: 'open' }).innerHTML = html`
			<svg width="${size}" height="${size}" viewBox="0 0 ${box} ${box}">${markup}</svg>
			<style>
			:host {
				display: block;
				flex: none;
				width: ${size}px;
				height: ${size}px;
			}
			svg {
				display: block;
				overflow: visible;
			}
			</style>
		`
	}
}


/**
 * Single line of text, tracked to fill a width of w pixels
 */
class FitText extends HTMLElement {
	connectedCallback() {
		this.attachShadow({ mode: 'open' }).innerHTML = html`
			<span><slot></slot></span>
			<style>
			:host {
				display: block;
				flex: none;
				white-space: nowrap;
			}
			span {
				display: inline-block;
				white-space: pre;
			}
			</style>
		`
		const span = this.shadowRoot.querySelector('span')
		const slot = this.querySelector('slot')
		const text = slot ? slot.assignedNodes().map(n => n.textContent).join('') : this.textContent
		const width = Number(this.getAttribute('w'))
		const natural = span.getBoundingClientRect().width
		span.style.letterSpacing = (width - natural) / text.length + 'px'
		this.style.width = width + 'px'
	}
}


customElements.define('browser-tab', BrowserTab);
customElements.define('browser-tabs', BrowserTabs);
customElements.define('browser-toolbar', BrowserToolbar);
customElements.define('book-mark', BookMark);
customElements.define('bookmarks-bar', BookmarksBar);
customElements.define('nav-item', NavItem);
customElements.define('mail-sidebar', MailSidebar);
customElements.define('mail-header', MailHeader);
customElements.define('file-chip', FileChip);
customElements.define('mail-row', MailRow);
customElements.define('mail-panel', MailPanel);
customElements.define('mail-app', MailApp);
customElements.define('task-button', TaskButton);
customElements.define('task-bar', TaskBar);
customElements.define('ui-icon', UiIcon);
// last, so that every text is laid out when it is measured
customElements.define('fit-text', FitText);
</script>
</body>
</html>
